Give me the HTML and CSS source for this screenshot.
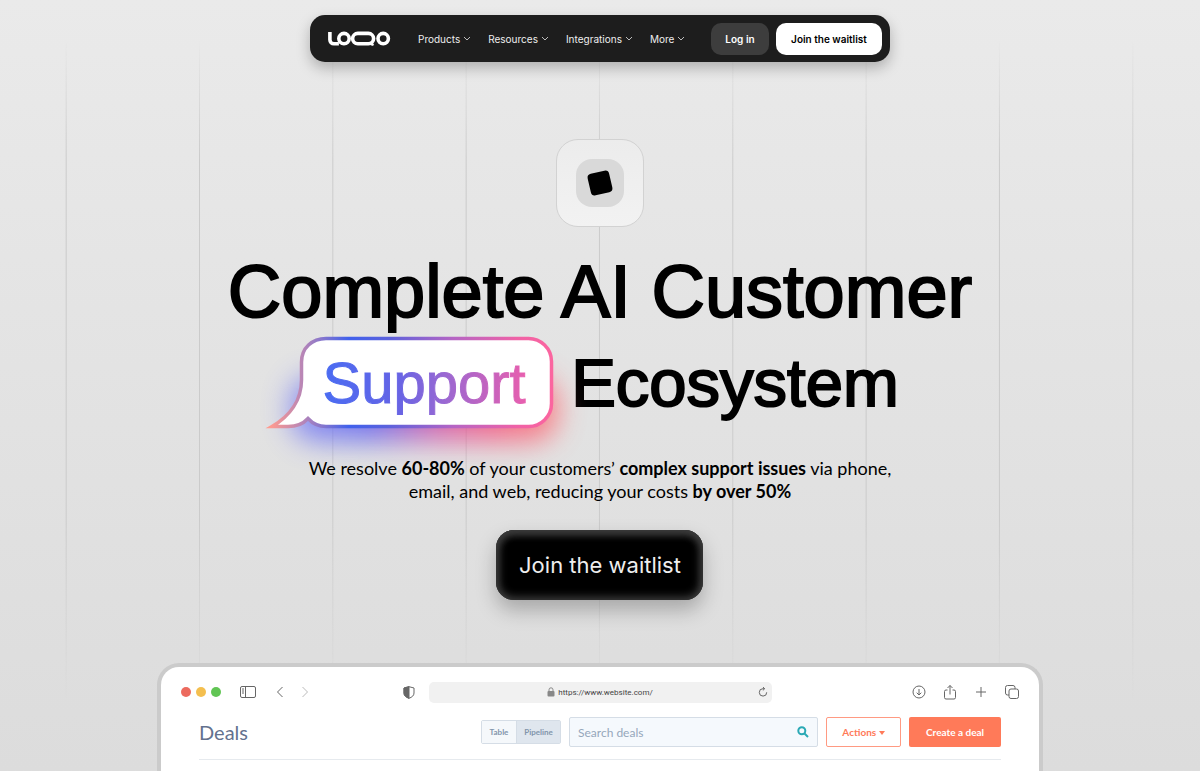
FILE: index.html
```
<!DOCTYPE html>
<html lang="en">
<head>
    <meta charset="UTF-8">
    <meta name="viewport" content="width=device-width, initial-scale=1.0">
    <title>LOQO - Complete AI Customer Support Ecosystem</title>
    <link rel="stylesheet" href="styles.css">
</head>
<body>

    <header class="navbar">
        <a href="#" class="logo" aria-label="LOQO">
            <svg width="63" height="16" viewBox="0 0 63 16" fill="none" stroke="#fff" stroke-width="3.6">
                <path d="M1.9 1v7.800a4 4 0 0 0 4 4h5"/>
                <circle cx="16" cy="7.600" r="5.200"/>
                <rect x="24.600" y="2.400" width="21" height="10.400" rx="5.200"/>
                <path d="M39 12.800h3.500c1 0 2 .6 2.600 1.700" stroke-width="2.600"/>
                <circle cx="55.200" cy="7.600" r="5.200"/>
            </svg>
        </a>
        <nav class="nav-links">
            <a href="#">Products <svg class="chevron" viewBox="0 0 8 5"><path d="M1 1l3 3 3-3"/></svg></a>
            <a href="#">Resources <svg class="chevron" viewBox="0 0 8 5"><path d="M1 1l3 3 3-3"/></svg></a>
            <a href="#">Integrations <svg class="chevron" viewBox="0 0 8 5"><path d="M1 1l3 3 3-3"/></svg></a>
            <a href="#">More <svg class="chevron" viewBox="0 0 8 5"><path d="M1 1l3 3 3-3"/></svg></a>
        </nav>
        <div class="nav-buttons">
            <button class="btn-login">Log in</button>
            <button class="btn-join">Join the waitlist</button>
        </div>
    </header>

    <main class="hero">
        <div class="app-icon">
            <div class="app-icon-inner">
                <div class="app-icon-mark"></div>
            </div>
        </div>

        <h1>
            <span class="title-top">Complete AI Customer</span>
            <span class="title-bottom">
                <span class="bubble">
                    <svg class="bubble-shape" width="290" height="98" viewBox="0 0 290 98">
                        <defs>
                            <linearGradient id="stroke" gradientUnits="userSpaceOnUse" x1="4" y1="0" x2="286" y2="0">
                                <stop offset="0" stop-color="#ff9a8f"/>
                                <stop offset="0.12" stop-color="#b585b8"/>
                                <stop offset="0.28" stop-color="#4061ec"/>
                                <stop offset="0.42" stop-color="#5c62dc"/>
                                <stop offset="0.65" stop-color="#b565c4"/>
                                <stop offset="0.88" stop-color="#f062a6"/>
                                <stop offset="1" stop-color="#fb659f"/>
                            </linearGradient>
                            <linearGradient id="glow" x1="0" y1="0" x2="1" y2="0">
                                <stop offset="0" stop-color="#7d83f5"/>
                                <stop offset="0.3" stop-color="#5a5cf0"/>
                                <stop offset="0.55" stop-color="#d04fa5"/>
                                <stop offset="0.75" stop-color="#f5507c"/>
                                <stop offset="1" stop-color="#ff7070"/>
                            </linearGradient>
                            <filter id="blur" x="-30%" y="-60%" width="160%" height="240%">
                                <feGaussianBlur stdDeviation="14"/>
                            </filter>
                        </defs>
                        <rect x="24" y="42" width="268" height="66" rx="26" fill="url(#glow)" filter="url(#blur)" opacity="0.8"/>
                        <path d="M60 4.500H262a23 23 0 0 1 23.500 23V69.500a23 23 0 0 1-23.500 23H60C52 92.500 47 90 42 84.500C37 90 31 92.500 22 92.500H6C24 82 35.500 66 35.500 46V28C35.500 14 46 4.500 60 4.500Z" fill="#fff" stroke="url(#stroke)" stroke-width="3.500" stroke-miterlimit="8"/>
                    </svg>
                    <span class="bubble-text">Support</span>
                </span>
                <span>Ecosystem</span>
            </span>
        </h1>

        <p class="subtitle">We resolve <strong>60-80%</strong> of your customers’ <strong>complex support issues</strong> via phone,<br> email, and web, reducing your costs <strong>by over 50%</strong></p>

        <button class="cta">Join the waitlist</button>
    </main>

    <section class="browser">
        <div class="browser-bar">
            <div class="bar-left">
                <span class="dot red"></span>
                <span class="dot yellow"></span>
                <span class="dot green"></span>
                <svg class="icon icon-sidebar" width="16" height="12" viewBox="0 0 16 12"><rect x="0.500" y="0.500" width="15" height="11" rx="1.500"/><path d="M5.500 .5v11M2 3h2M2 5h2M2 7h2"/></svg>
                <svg class="icon icon-back" width="8" height="12" viewBox="0 0 8 12"><path d="M6.500 1L1.500 6l5 5"/></svg>
                <svg class="icon icon-next" width="8" height="12" viewBox="0 0 8 12"><path d="M1.500 1l5 5-5 5"/></svg>
                <svg class="icon icon-shield" width="12" height="13" viewBox="0 0 12 13"><path d="M6 .7L11 2v5c0 2.600-2 4.200-5 5.300C3 11.200 1 9.600 1 7V2z"/><path d="M6 .7v11.600C3 11.200 1 9.600 1 7V2z" fill="#666"/></svg>
            </div>
            <div class="address">
                <svg width="8" height="10" viewBox="0 0 8 10"><rect x="0.500" y="4" width="7" height="5.500" rx="1" fill="#888"/><path d="M2 4V2.800a2 2 0 0 1 4 0V4" fill="none" stroke="#888"/></svg>
                <span>https://www.website.com/</span>
                <svg class="icon reload" width="10" height="10" viewBox="0 0 10 10"><path d="M8.700 5.300A3.700 3.700 0 1 1 5 1.700h1.500M4.900 0l1.800 1.700-1.800 1.700"/></svg>
            </div>
            <div class="bar-right">
                <svg class="icon" width="14" height="14" viewBox="0 0 14 14"><circle cx="7" cy="7" r="6"/><path d="M7 4v6M4.700 7.700L7 10l2.300-2.300"/></svg>
                <svg class="icon" width="14" height="16" viewBox="0 0 14 16"><path d="M4.500 6H3a1.500 1.500 0 0 0-1.500 1.500v6A1.500 1.500 0 0 0 3 15h8a1.500 1.500 0 0 0 1.500-1.500v-6A1.500 1.500 0 0 0 11 6H9.500M7 10.500V1.500M4.500 4L7 1.500 9.500 4"/></svg>
                <svg class="icon" width="14" height="14" viewBox="0 0 14 14"><path d="M7 2v10M2 7h10"/></svg>
                <svg class="icon" width="14" height="14" viewBox="0 0 14 14"><rect x="4" y="4" width="9.500" height="9.500" rx="2"/><path d="M4 10H2.500a2 2 0 0 1-2-2V2.500a2 2 0 0 1 2-2H8a2 2 0 0 1 2 2V4"/></svg>
            </div>
        </div>

        <div class="deals">
            <h2>Deals</h2>
            <div class="view-toggle">
                <button>Table</button>
                <button class="active">Pipeline</button>
            </div>
            <div class="search">
                <input type="text" placeholder="Search deals" aria-label="Search deals">
                <svg width="12" height="12" viewBox="0 0 12 12" fill="none" stroke="#2aa9b5" stroke-width="2"><circle cx="4.800" cy="4.800" r="3.500"/><path d="M7.500 7.500l3.500 3.500"/></svg>
            </div>
            <button class="btn-actions">Actions <span class="caret"></span></button>
            <button class="btn-create">Create a deal</button>
        </div>
    </section>

</body>
</html>
```
FILE: styles.css
```
* {
    box-sizing: border-box;
}

body {
    margin: 0;
    min-height: 100vh;
    font-family: Inter, "Liberation Sans", sans-serif;
    color: #000;
    background: linear-gradient(#eaeaea, #e4e4e4 40%, #dcdcdc);
    display: flex;
    flex-direction: column;
    align-items: center;
    position: relative;
}

/* vertical guide lines */
body::before {
    content: "";
    position: absolute;
    inset: 0;
    z-index: -1;
    background: linear-gradient(90deg, transparent calc(50% - 1px), #cbcbcb calc(50% - 1px), #cbcbcb 50%, transparent 50%) 0 0 / calc(100% / 9) 100%;
    -webkit-mask-image: linear-gradient(transparent 40px, #000 160px, #000 520px, transparent 700px);
    mask-image: linear-gradient(transparent 40px, #000 160px, #000 520px, transparent 700px);
}

button {
    font-family: inherit;
    border: none;
    padding: 0;
    cursor: pointer;
}

a {
    color: inherit;
    text-decoration: none;
}

.navbar {
    display: flex;
    align-items: center;
    width: 580px;
    max-width: 100%;
    height: 47px;
    margin-top: 15px;
    padding: 0 8px 0 18px;
    background: #1d1d1d;
    border-radius: 15px;
    box-shadow: 0 6px 14px rgba(0, 0, 0, 0.25);
}

.logo svg {
    display: block;
}

.nav-links {
    display: flex;
    gap: 17px;
    margin-left: 27px;
    font-size: 10px;
    color: #eee;
}

.nav-links a {
    display: flex;
    align-items: center;
    gap: 3px;
}

.chevron {
    width: 8px;
    height: 5px;
    fill: none;
    stroke: #bbb;
}

.nav-buttons {
    display: flex;
    gap: 7px;
    margin-left: auto;
}

.nav-buttons button {
    height: 32px;
    border-radius: 10px;
    font-size: 10px;
    font-weight: 600;
}

.btn-login {
    width: 58px;
    background: #3d3d3d;
    color: #fff;
}

.btn-join {
    width: 106px;
    background: #fff;
    color: #000;
}

.hero {
    display: flex;
    flex-direction: column;
    align-items: center;
    margin-top: 77px;
}

.app-icon {
    display: grid;
    place-items: center;
    width: 88px;
    height: 88px;
    background: linear-gradient(#ececec, #f2f2f2);
    border: 1px solid #d2d2d2;
    border-radius: 22px;
}

.app-icon-inner {
    display: grid;
    place-items: center;
    width: 48px;
    height: 48px;
    background: #d9d9d9;
    border-radius: 16px;
}

.app-icon-mark {
    width: 22px;
    height: 22px;
    background: #000;
    border-radius: 4px;
    transform: rotate(-13deg);
}

h1 {
    margin: 20px 0 0;
    font-family: "Liberation Sans", Arial, sans-serif;
    font-weight: 400;
    text-align: center;
    -webkit-text-stroke: 2px #000;
}

.title-top {
    display: block;
    font-size: 74px;
    line-height: 90px;
}

.title-bottom {
    display: flex;
    justify-content: center;
    gap: 18px;
    font-size: 67px;
    line-height: 92px;
}

.bubble {
    position: relative;
    width: 252px;
    padding-right: 6px;
    font-size: 58px;
}

.bubble-shape {
    position: absolute;
    top: -3px;
    right: -3px;
    overflow: visible;
    -webkit-text-stroke: 0;
}

.bubble-text {
    position: relative;
    background: linear-gradient(90deg, #4a6cf2, #6364e6 35%, #9a68d2 60%, #e85fae);
    -webkit-background-clip: text;
    background-clip: text;
    color: transparent;
    -webkit-text-stroke: 1px transparent;
}

.subtitle {
    position: relative;
    margin: 28px 0 0;
    font-family: Lato, sans-serif;
    font-size: 18px;
    line-height: 23px;
    text-align: center;
}

.cta {
    width: 207px;
    height: 70px;
    margin-top: 27px;
    font-size: 22px;
    color: #eee;
    background: #000;
    border-radius: 18px;
    box-shadow: inset 0 0 8px 3px #3c3c3c, inset 0 4px 8px #3c3c3c, 0 10px 20px rgba(0, 0, 0, 0.25);
}

.browser {
    flex: 1;
    width: 886px;
    max-width: 100%;
    margin-top: 63px;
    background: #fff;
    border: 4px solid #cbcbcb;
    border-bottom: none;
    border-radius: 22px 22px 0 0;
}

.browser-bar {
    display: grid;
    grid-template-columns: 1fr 343px 1fr;
    align-items: center;
    height: 50px;
    padding: 0 20px;
}

.bar-left,
.bar-right {
    display: flex;
    align-items: center;
}

.bar-right {
    justify-content: flex-end;
    gap: 17px;
}

.dot {
    width: 10px;
    height: 10px;
    margin-right: 5px;
    border-radius: 50%;
}

.red {
    background: #ec6a5e;
}

.yellow {
    background: #f4bf4f;
}

.green {
    background: #61c554;
}

.icon {
    fill: none;
    stroke: #666;
}

.icon-sidebar {
    margin-left: 14px;
}

.icon-back {
    margin-left: 20px;
}

.icon-next {
    margin-left: 17px;
    stroke: #bbb;
}

.icon-shield {
    margin: 0 14px 0 auto;
}

.address {
    position: relative;
    display: flex;
    align-items: center;
    justify-content: center;
    gap: 3px;
    height: 21px;
    font-family: Roboto, sans-serif;
    font-size: 8px;
    color: #444;
    background: #f1f1f1;
    border-radius: 5px;
}

.reload {
    position: absolute;
    right: 4px;
}

.deals {
    display: flex;
    align-items: center;
    gap: 8px;
    margin: 0 38px;
    padding-bottom: 12px;
    border-bottom: 1px solid #e6eaee;
    font-family: Lato, sans-serif;
}

.deals h2 {
    margin: 0 auto 0 0;
    font-size: 20px;
    line-height: 30px;
    font-weight: 400;
    color: #63718e;
}

.deals button {
    font-size: 10px;
    font-weight: 700;
}

.view-toggle {
    display: flex;
    height: 24px;
    border: 1px solid #d5dde6;
    border-radius: 2px;
}

.deals .view-toggle button {
    width: 34px;
    font-size: 8px;
    color: #8295ab;
    background: #f5f8fb;
}

.deals .view-toggle .active {
    width: 44px;
    background: #dfe6ee;
    border-left: 1px solid #d5dde6;
}

.search {
    display: flex;
    align-items: center;
    width: 249px;
    height: 30px;
    padding: 0 8px;
    background: #f5f9fd;
    border: 1px solid #d5dde6;
    border-radius: 2px;
}

.search input {
    flex: 1;
    min-width: 0;
    padding: 0;
    border: none;
    background: none;
    font-family: inherit;
    font-size: 12px;
}

.search input::placeholder {
    color: #96a7bb;
}

.btn-actions,
.btn-create {
    height: 30px;
    border-radius: 2px;
}

.btn-actions {
    width: 75px;
    color: #ff7a59;
    background: #fff;
}

.deals .btn-actions {
    border: 1px solid #ff9a82;
}

.caret {
    display: inline-block;
    border: 3px solid transparent;
    border-top: 4px solid #ff7a59;
    border-bottom: none;
    vertical-align: middle;
}

.btn-create {
    width: 92px;
    color: #fff;
    background: #ff7a59;
}
```
